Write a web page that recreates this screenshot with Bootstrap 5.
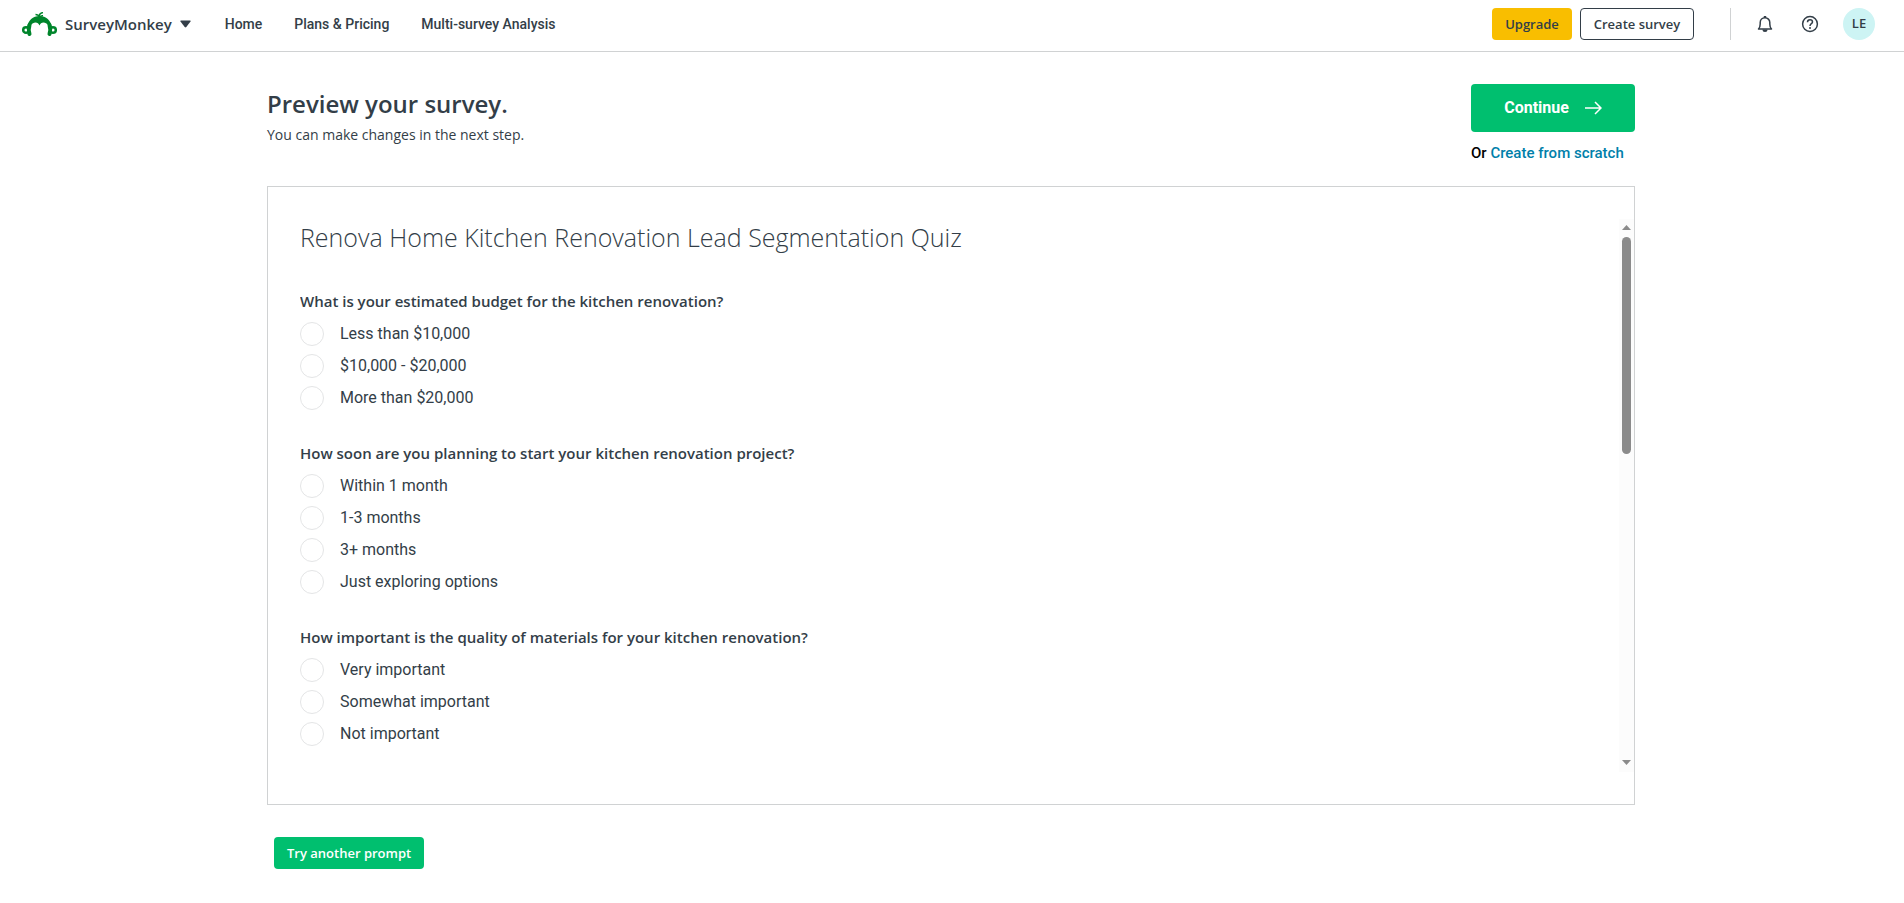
<!DOCTYPE html>
<html lang="en">
<head>
<meta charset="utf-8">
<meta name="viewport" content="width=device-width, initial-scale=1">
<title>Preview your survey</title>
<link href="https://cdn.jsdelivr.net/npm/bootstrap@5.3.0/dist/css/bootstrap.min.css" rel="stylesheet">
<style>
  :root { --ink: #333e48; --rule: #d0d2d3; --green: #00bf6f; }
  body { font-family: "Open Sans", "Noto Sans", sans-serif; font-size: 14px; line-height: 24px; color: var(--ink); background: #fff; }
  .site-header { border-bottom: 1px solid var(--rule); padding: 8px 29px 11px 22px; }
  .brand-btn { font-size: 15px; font-weight: 600; color: var(--ink); gap: 8px; }
  .main-nav { gap: 32px; margin-left: 34px; }
  .main-nav .nav-link { font: 500 14px/24px Roboto, sans-serif; color: var(--ink); white-space: nowrap; }
  .btn { --bs-btn-border-radius: 4px; font-weight: 600; }
  .btn-compact { height: 32px; padding: 0 13px; font-size: 13px; line-height: 24px; }
  .btn-upgrade { width: 80px; }
  .btn-create { width: 114px; }
  .btn-upgrade, .btn-upgrade:hover { background: #f9be00; color: var(--ink); }
  .btn-create, .btn-create:hover { background: #fff; color: var(--ink); border-color: var(--ink); }
  .btn-green, .btn-green:hover { background: var(--green); color: #fff; }
  .header-tools { border-left: 1px solid var(--rule); height: 32px; margin-left: 36px; padding-left: 22px; gap: 21px; }
  .icon-btn { width: 24px; height: 24px; color: var(--ink); }
  .user-avatar { width: 32px; height: 32px; background: #cdf4f4; color: var(--ink); font-size: 13px; font-weight: 600; }
  .page-wrap { max-width: 1370px; padding-right: 2px; }
  .page-top { padding-top: 32px; margin-bottom: 21px; }
  .page-heading { font-size: 24px; line-height: 32px; font-weight: 600; margin: 4px 0 3px; }
  .btn-continue { width: 164px; height: 48px; font: 700 16px/24px Roboto, sans-serif; gap: 16px; }
  .scratch-line { font: 500 15px/24px Roboto, sans-serif; color: #000; margin-top: 9px; }
  .scratch-line a { color: #007faa; }
  .preview-box { border: 1px solid var(--rule); padding: 32px 0 32px 32px; }
  .preview-scroll { height: 553px; overflow: hidden; }
  .quiz-title { font-size: 25px; font-weight: 300; line-height: 32px; margin: 2px 0 36px; }
  .question { margin-bottom: 27px; }
  .question legend { font-size: 15px; font-weight: 600; line-height: 24px; margin-bottom: 5px; }
  .option { height: 32px; font: 400 16px/24px Roboto, sans-serif; gap: 16px; }
  .option .form-check-input { width: 24px; height: 24px; margin: 0; border: 1px solid #e4e5e6; }
  .scroll-rail { width: 15px; background: #fcfcfc; color: #8b8b8b; padding: 6px 0 7px; }
  .scroll-thumb { width: 9px; height: 217px; border-radius: 5px; background: #8b8b8b; margin-top: 7px; }
  .page-foot { padding: 32px 7px; }
</style>
</head>
<body>
<header class="site-header d-flex align-items-center">
  <button type="button" class="brand-btn btn p-0 border-0 d-flex align-items-center">
    <svg width="35" height="25" viewBox="0 0 35 25" fill="none" stroke="#00852b" aria-hidden="true">
      <path fill="#00852b" stroke="none" d="M5 16C6 8 11 4 17.500 4S29 8 30 16l-2 6C28 14 25 10.500 21.500 10.500c-2 0-3.200 1.200-4 3-.8-1.800-2-3-4-3C10 10.500 7 14 7 22Z"/>
      <circle cx="4" cy="18" r="2.800" stroke-width="2.500"/>
      <circle cx="31" cy="18" r="2.800" stroke-width="2.500"/>
      <path stroke-width="4" stroke-linecap="round" d="M7.500 13c-1 3-1 6 0 9M27.500 13c1 3 1 6 0 9"/>
      <path stroke-width="1.500" d="M17 5c0-2 1.500-4 4-4.500M17.500 5c-.8-1.600-2-2.500-4-2.500M17.500 5c1-1.200 2-1.400 3.500-1.200"/>
    </svg>
    <span>SurveyMonkey</span>
    <svg width="11" height="8" viewBox="0 0 11 8" fill="currentColor" aria-hidden="true"><path d="M1 .5h9q1 0 .5.900L6.300 7q-.8.900-1.600 0L.5 1.400Q0 .5 1 .5Z"/></svg>
  </button>
  <nav class="main-nav d-flex" aria-label="Main">
    <a class="nav-link" href="#">Home</a>
    <a class="nav-link" href="#">Plans &amp; Pricing</a>
    <a class="nav-link" href="#">Multi-survey Analysis</a>
  </nav>
  <div class="d-flex align-items-center gap-2 ms-auto">
    <button type="button" class="btn btn-compact btn-upgrade px-0 border-0">Upgrade</button>
    <button type="button" class="btn btn-compact btn-create px-0 py-0">Create survey</button>
  </div>
  <div class="header-tools d-flex align-items-center">
    <button type="button" class="icon-btn btn p-0 border-0 d-flex align-items-center justify-content-center" aria-label="Notifications">
      <svg width="16" height="18" viewBox="0 0 16 18" fill="none" stroke="currentColor" stroke-width="1.500" stroke-linejoin="round"><path d="M1.500 14h13c-1.200-1.200-1.700-2.200-1.700-5V7.500a4.800 4.800 0 0 0-9.600 0V9c0 2.800-.5 3.800-1.700 5Z"/><path fill="currentColor" stroke="none" d="M6.800 1h2.400v2H6.800ZM5.500 14.500h5a2.500 2.500 0 0 1-5 0Z"/></svg>
    </button>
    <button type="button" class="icon-btn btn p-0 border-0 d-flex align-items-center justify-content-center" aria-label="Help">
      <svg width="18" height="18" viewBox="0 0 18 18" fill="none" stroke="currentColor" stroke-width="1.500"><circle cx="9" cy="9" r="7.400"/><path d="M6.500 7.200c0-1.600 1-2.500 2.500-2.500s2.500.9 2.500 2.200c0 1.700-2.500 1.900-2.500 4"/><circle cx="9" cy="12.900" r="1" fill="currentColor" stroke="none"/></svg>
    </button>
    <button type="button" class="user-avatar btn rounded-circle p-0 border-0" aria-label="Account LE">LE</button>
  </div>
</header>

<main class="page-wrap mx-auto">
  <div class="page-top d-flex justify-content-between align-items-start">
    <div>
      <h1 class="page-heading">Preview your survey.</h1>
      <p class="mb-0">You can make changes in the next step.</p>
    </div>
    <div>
      <button type="button" class="btn btn-green btn-continue p-0 border-0 d-flex align-items-center justify-content-center">
        Continue
        <svg width="17" height="14" viewBox="0 0 17 14" fill="none" stroke="currentColor" stroke-width="1.500" aria-hidden="true"><path d="M0 7h15.500M10 1l6 6-6 6"/></svg>
      </button>
      <p class="scratch-line mb-0">Or <a class="text-decoration-none" href="#">Create from scratch</a></p>
    </div>
  </div>

  <section class="preview-box d-flex" aria-label="Survey preview">
    <div class="preview-scroll flex-grow-1">
      <h2 class="quiz-title">Renova Home Kitchen Renovation Lead Segmentation Quiz</h2>
      <fieldset class="question">
        <legend>What is your estimated budget for the kitchen renovation?</legend>
        <div class="option d-flex align-items-center"><input class="form-check-input" type="radio" name="budget" id="b1"><label for="b1">Less than $10,000</label></div>
        <div class="option d-flex align-items-center"><input class="form-check-input" type="radio" name="budget" id="b2"><label for="b2">$10,000 - $20,000</label></div>
        <div class="option d-flex align-items-center"><input class="form-check-input" type="radio" name="budget" id="b3"><label for="b3">More than $20,000</label></div>
      </fieldset>
      <fieldset class="question">
        <legend>How soon are you planning to start your kitchen renovation project?</legend>
        <div class="option d-flex align-items-center"><input class="form-check-input" type="radio" name="start" id="s1"><label for="s1">Within 1 month</label></div>
        <div class="option d-flex align-items-center"><input class="form-check-input" type="radio" name="start" id="s2"><label for="s2">1-3 months</label></div>
        <div class="option d-flex align-items-center"><input class="form-check-input" type="radio" name="start" id="s3"><label for="s3">3+ months</label></div>
        <div class="option d-flex align-items-center"><input class="form-check-input" type="radio" name="start" id="s4"><label for="s4">Just exploring options</label></div>
      </fieldset>
      <fieldset class="question">
        <legend>How important is the quality of materials for your kitchen renovation?</legend>
        <div class="option d-flex align-items-center"><input class="form-check-input" type="radio" name="quality" id="q1"><label for="q1">Very important</label></div>
        <div class="option d-flex align-items-center"><input class="form-check-input" type="radio" name="quality" id="q2"><label for="q2">Somewhat important</label></div>
        <div class="option d-flex align-items-center"><input class="form-check-input" type="radio" name="quality" id="q3"><label for="q3">Not important</label></div>
      </fieldset>
    </div>
    <div class="scroll-rail d-flex flex-column align-items-center flex-shrink-0" aria-hidden="true">
      <svg width="9" height="5" viewBox="0 0 9 5" fill="currentColor"><path d="M0 5 4.500 0 9 5Z"/></svg>
      <div class="scroll-thumb"></div>
      <svg class="mt-auto" width="9" height="5" viewBox="0 0 9 5" fill="currentColor"><path d="M0 0h9L4.500 5Z"/></svg>
    </div>
  </section>

  <div class="page-foot">
    <button type="button" class="btn btn-green btn-compact border-0">Try another prompt</button>
  </div>
</main>
<script src="https://cdn.jsdelivr.net/npm/bootstrap@5.3.0/dist/js/bootstrap.bundle.min.js"></script>
</body>
</html>
